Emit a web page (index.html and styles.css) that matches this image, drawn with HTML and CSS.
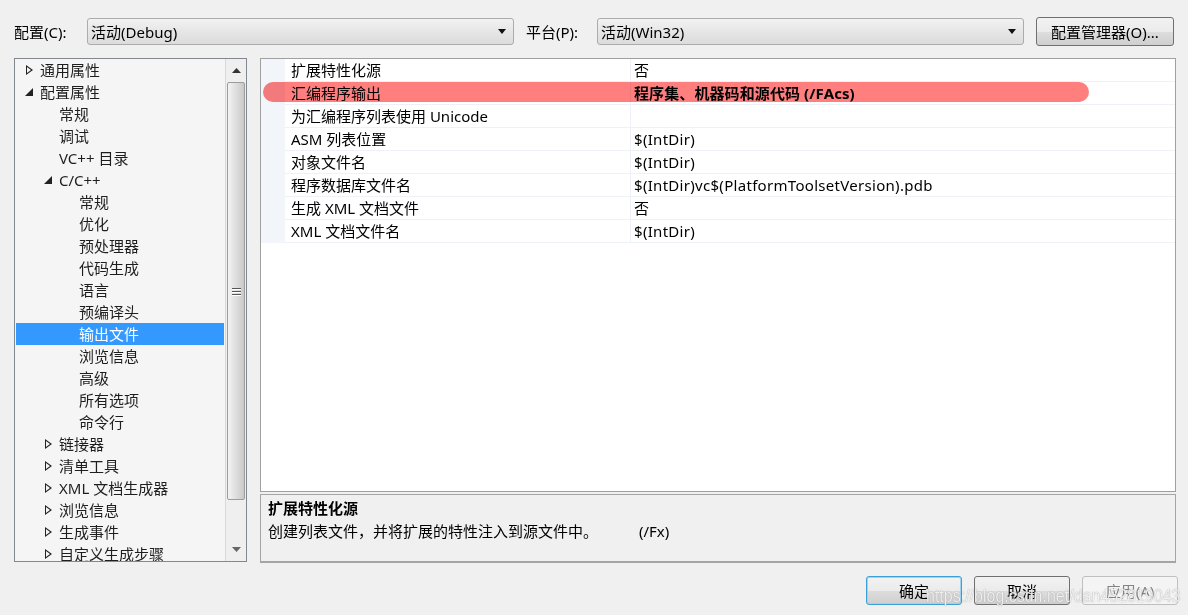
FILE: index.html
```html
<!DOCTYPE html>
<html lang="zh-CN">
<head>
    <meta charset="UTF-8">
    <title>属性页</title>
    <link rel="stylesheet" href="styles.css">
</head>
<body>
    <div id="dialog">
        <div class="top-bar">
            <span class="lbl lbl-cfg">配置(C):</span>
            <div class="combo"><span>活动(Debug)</span><i class="caret"></i></div>
            <span class="lbl lbl-plat">平台(P):</span>
            <div class="combo"><span>活动(Win32)</span><i class="caret"></i></div>
            <button class="btn btn-mgr">配置管理器(O)...</button>
        </div>

        <div class="main">
            <div class="tree">
                <ul class="tree-list">
                    <li class="l0 closed"><i class="arrow"></i>通用属性</li>
                    <li class="l0 open"><i class="arrow"></i>配置属性</li>
                    <li class="l1"><i class="arrow"></i>常规</li>
                    <li class="l1"><i class="arrow"></i>调试</li>
                    <li class="l1"><i class="arrow"></i>VC++ 目录</li>
                    <li class="l1 open"><i class="arrow"></i>C/C++</li>
                    <li class="l2"><i class="arrow"></i>常规</li>
                    <li class="l2"><i class="arrow"></i>优化</li>
                    <li class="l2"><i class="arrow"></i>预处理器</li>
                    <li class="l2"><i class="arrow"></i>代码生成</li>
                    <li class="l2"><i class="arrow"></i>语言</li>
                    <li class="l2"><i class="arrow"></i>预编译头</li>
                    <li class="l2 selected"><i class="arrow"></i>输出文件</li>
                    <li class="l2"><i class="arrow"></i>浏览信息</li>
                    <li class="l2"><i class="arrow"></i>高级</li>
                    <li class="l2"><i class="arrow"></i>所有选项</li>
                    <li class="l2"><i class="arrow"></i>命令行</li>
                    <li class="l1 closed"><i class="arrow"></i>链接器</li>
                    <li class="l1 closed"><i class="arrow"></i>清单工具</li>
                    <li class="l1 closed"><i class="arrow"></i>XML 文档生成器</li>
                    <li class="l1 closed"><i class="arrow"></i>浏览信息</li>
                    <li class="l1 closed"><i class="arrow"></i>生成事件</li>
                    <li class="l1 closed"><i class="arrow"></i>自定义生成步骤</li>
                </ul>
                <div class="vscroll">
                    <div class="sb-btn"><svg width="9" height="5" viewBox="0 0 9 5"><path d="M0 5 L4.5 0 L9 5 Z" fill="#333"/></svg></div>
                    <div class="sb-thumb">
                        <div class="grip"><span></span><span></span><span></span></div>
                    </div>
                    <div class="sb-btn sb-down"><svg width="9" height="5" viewBox="0 0 9 5"><path d="M0 0 L9 0 L4.5 5 Z" fill="#666"/></svg></div>
                </div>
            </div>

            <div class="right">
                <div class="grid">
                    <div class="grid-row"><div class="gutter"></div><div class="name">扩展特性化源</div><div class="value">否</div></div>
                    <div class="grid-row"><div class="gutter"></div><div class="name">汇编程序输出</div><div class="value bold">程序集、机器码和源代码 (/FAcs)</div></div>
                    <div class="grid-row"><div class="gutter"></div><div class="name">为汇编程序列表使用 Unicode</div><div class="value"></div></div>
                    <div class="grid-row"><div class="gutter"></div><div class="name">ASM 列表位置</div><div class="value">$(IntDir)</div></div>
                    <div class="grid-row"><div class="gutter"></div><div class="name">对象文件名</div><div class="value">$(IntDir)</div></div>
                    <div class="grid-row"><div class="gutter"></div><div class="name">程序数据库文件名</div><div class="value">$(IntDir)vc$(PlatformToolsetVersion).pdb</div></div>
                    <div class="grid-row"><div class="gutter"></div><div class="name">生成 XML 文档文件</div><div class="value">否</div></div>
                    <div class="grid-row"><div class="gutter"></div><div class="name">XML 文档文件名</div><div class="value">$(IntDir)</div></div>
                    <!-- 红色标注 -->
                    <div class="mark"></div>
                </div>
                <div class="desc">
                    <div class="desc-title">扩展特性化源</div>
                    <div class="desc-text"><span class="desc-body">创建列表文件，并将扩展的特性注入到源文件中。</span><span>(/Fx)</span></div>
                </div>
            </div>
        </div>

        <div class="bottom-bar">
            <button class="btn btn-ok">确定</button>
            <button class="btn">取消</button>
            <button class="btn" disabled>应用(A)</button>
        </div>

        <div class="watermark">https://blog.csdn.net/dan452819043</div>
    </div>
</body>
</html>
```

FILE: styles.css
```css
* {
    box-sizing: border-box;
}
body {
    margin: 0;
    background-color: #f0f0f0;
    font-family: "Noto Sans", "Noto Sans CJK SC", sans-serif;
    font-size: 15px;
    color: #000;
}
#dialog {
    position: relative;
    width: 1188px;
    height: 615px;
    overflow: hidden;
}

/* 上方的配置/平台栏 */
.top-bar {
    display: flex;
    align-items: center;
    padding: 17px 0 0 14px;
    height: 46px;
}
.lbl {
    line-height: 20px;
}
.lbl-cfg {
    width: 73px;
}
.lbl-plat {
    width: 71px;
    margin-left: 12px;
}
.combo {
    width: 427px;
    height: 27px;
    border: 1px solid #acacac;
    border-radius: 3px;
    background: linear-gradient(#f2f2f2, #e6e6e6 50%, #dcdcdc);
    display: flex;
    align-items: center;
    justify-content: space-between;
    padding: 0 7px 0 3px;
}
.caret {
    width: 0;
    height: 0;
    border-left: 4px solid transparent;
    border-right: 4px solid transparent;
    border-top: 5px solid #111;
}
.btn {
    font-family: inherit;
    font-size: 15px;
    height: 29px;
    width: 96px;
    border: 1px solid #707070;
    border-radius: 3px;
    background: linear-gradient(#f2f2f2, #ebebeb 50%, #dddddd 51%, #cfcfcf);
    color: #000;
    padding: 0;
}
.btn-mgr {
    width: 138px;
    margin-left: 12px;
}
.btn-ok {
    border-color: #3c9fd7;
    box-shadow: inset 0 0 0 1px #9fd4f0;
}
.btn:disabled {
    border-color: #bfbfbf;
    background: #f4f4f4;
    color: #838383;
}

/* 中间区域 */
.main {
    display: flex;
    gap: 13px;
    padding: 12px 0 0 14px;
}
.tree {
    width: 233px;
    height: 504px;
    border: 1px solid #828790;
    background-color: #f5f5f5;
    display: flex;
    overflow: hidden;
}
.tree-list {
    list-style: none;
    margin: 0;
    padding: 0 1px 0 1px;
    flex: 1;
    height: 100%;
    overflow: hidden;
}
.tree-list li {
    height: 22px;
    line-height: 22px;
    display: flex;
    align-items: center;
    white-space: nowrap;
    color: #1e1e1e;
}
.tree-list li.l0 { padding-left: 8px; }
.tree-list li.l1 { padding-left: 27px; }
.tree-list li.l2 { padding-left: 47px; }
.tree-list li.selected {
    background-color: #3399ff;
    color: #fff;
}
.arrow {
    width: 16px;
    height: 22px;
    flex: none;
    position: relative;
}
.closed .arrow::before {
    content: "";
    position: absolute;
    left: 2px;
    top: 6px;
    width: 0;
    height: 0;
    border-top: 5px solid transparent;
    border-bottom: 5px solid transparent;
    border-left: 7px solid #222;
}
.closed .arrow::after {
    content: "";
    position: absolute;
    left: 3px;
    top: 8px;
    width: 0;
    height: 0;
    border-top: 3px solid transparent;
    border-bottom: 3px solid transparent;
    border-left: 4px solid #f5f5f5;
}
.open .arrow::before {
    content: "";
    position: absolute;
    left: 1px;
    top: 7px;
    width: 0;
    height: 0;
    border-left: 8px solid transparent;
    border-bottom: 8px solid #222;
}

.vscroll {
    width: 21px;
    flex: none;
    border-left: 1px solid #d9d9d9;
    background-color: #efefef;
    display: flex;
    flex-direction: column;
    padding: 0 1px;
}
.sb-btn {
    height: 23px;
    display: flex;
    align-items: center;
    justify-content: center;
}
.sb-thumb {
    height: 418px;
    border: 1px solid #9c9c9c;
    border-radius: 2px;
    background: linear-gradient(to right, #f3f3f3, #e2e2e2 40%, #d6d6d6 70%, #c8c8c8);
    display: flex;
    align-items: center;
    justify-content: center;
    margin-bottom: 38px;
}
.grip {
    display: flex;
    flex-direction: column;
    gap: 2px;
}
.grip span {
    display: block;
    width: 9px;
    height: 1px;
    background-color: #555;
    box-shadow: 0 1px 0 #fff;
}

.right {
    width: 916px;
    display: flex;
    flex-direction: column;
    gap: 2px;
}
.grid {
    position: relative;
    height: 434px;
    border: 1px solid #a0a0a0;
    background-color: #fff;
}
.grid-row {
    display: flex;
    height: 23px;
    line-height: 22px;
}
.gutter {
    width: 24px;
    background-color: #f2f5fa;
}
.name {
    width: 346px;
    padding-left: 6px;
    border-bottom: 1px solid #eef1f6;
    border-right: 1px solid #eef1f6;
    white-space: nowrap;
}
.value {
    flex: 1;
    padding-left: 3px;
    border-bottom: 1px solid #eef1f6;
    white-space: nowrap;
    letter-spacing: 0.3px;
}
.bold {
    font-weight: bold;
    letter-spacing: 0.1px;
}
.mark {
    position: absolute;
    left: 2px;
    top: 23px;
    width: 826px;
    height: 20px;
    border-radius: 10px;
    background-color: #ff7f7f;
    mix-blend-mode: multiply;
}

.desc {
    height: 69px;
    border: 1px solid #a5a5a5;
    border-bottom-width: 2px;
    padding: 2px 0 0 7px;
}
.desc-title {
    font-weight: bold;
    line-height: 22px;
}
.desc-text {
    line-height: 22px;
    margin-top: 1px;
}
.desc-body {
    display: inline-block;
    width: 371px;
}

.bottom-bar {
    display: flex;
    justify-content: flex-end;
    gap: 12px;
    padding: 13px 10px 0 0;
}

.watermark {
    position: absolute;
    left: 926px;
    top: 588px;
    font-family: "Liberation Sans", sans-serif;
    font-size: 16px;
    transform: scaleY(1.1);
    color: rgba(255, 255, 255, 0.85);
    text-shadow: 0 0 1px rgba(90, 90, 90, 0.7);
    white-space: nowrap;
}
```
